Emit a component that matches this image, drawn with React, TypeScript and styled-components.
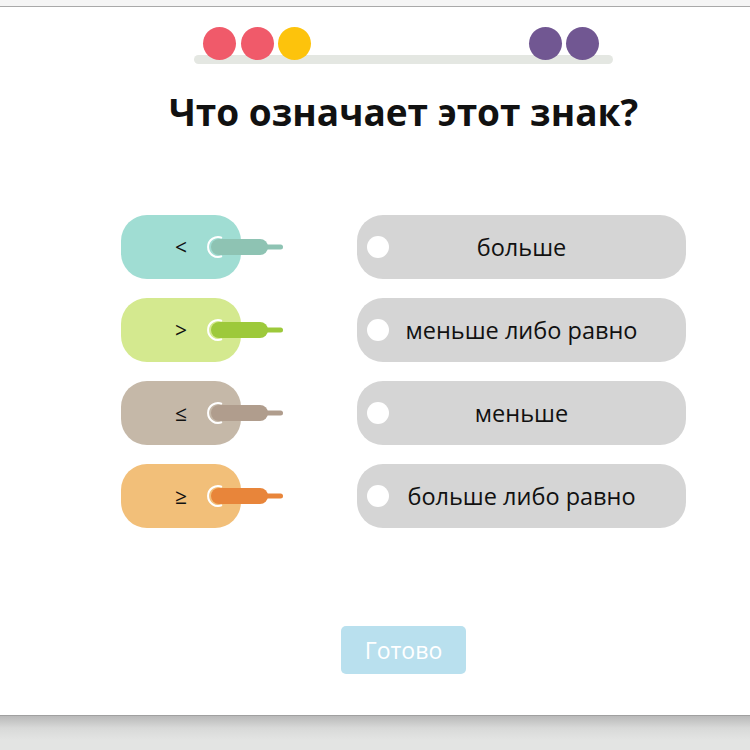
import * as React from 'react'
import styled, { createGlobalStyle } from 'styled-components'

const GlobalStyle = createGlobalStyle`
  html, body {
    margin: 0;
    padding: 0;
    background: #e3e4e3;
    font-family: "Open Sans", "Noto Sans", sans-serif;
  }
`

const TopStrip = styled.div`
  height: 6px;
  background: #f5f5f5;
  border-bottom: 1px solid #a9a9a9;
`

const Panel = styled.main`
  background: #ffffff;
  padding: 20px 0 41px 57px;
  display: flex;
  flex-direction: column;
  align-items: center;
  border-bottom: 1px solid #a0a0a0;
`

const Shade = styled.div`
  height: 34px;
  background: linear-gradient(#b9b9b9, #d8d9d8 12px, #e3e4e3 24px);
`

const Progress = styled.div`
  position: relative;
  width: 419px;
  height: 37px;
  display: flex;
  justify-content: space-between;
  padding: 0 14px 0 9px;
  box-sizing: border-box;

  &::before {
    content: '';
    position: absolute;
    left: 0;
    right: 0;
    bottom: 0;
    height: 9px;
    border-radius: 5px;
    background: #e4e7e2;
  }
`

const DotGroup = styled.div`
  position: relative;
  display: flex;
  gap: 4.5px;
`

const Dot = styled.span<{ $color: string }>`
  width: 33px;
  height: 33px;
  border-radius: 50%;
  background: ${p => p.$color};
`

const Title = styled.h1`
  margin: 26px 0 0;
  font-size: 37px;
  line-height: 44px;
  font-weight: 700;
  color: #111111;
  text-align: center;
`

const Board = styled.div`
  margin-top: 81px;
  display: grid;
  grid-template-columns: 120px 329px;
  column-gap: 116px;
  row-gap: 19px;
`

const SignCard = styled.div<{ $color: string }>`
  position: relative;
  height: 64px;
  border-radius: 26px;
  background: ${p => p.$color};
  display: flex;
  align-items: center;
  justify-content: center;
  font-size: 21px;
  color: #111111;
`

const Plug = styled.svg`
  position: absolute;
  left: 85px;
  top: 20px;
  width: 80px;
  height: 24px;
  overflow: visible;
`

const AnswerCard = styled.div`
  position: relative;
  height: 64px;
  border-radius: 26px;
  background: #d5d5d5;
  display: flex;
  align-items: center;
  justify-content: center;
  font-size: 23.5px;
  color: #111111;
`

const Socket = styled.span`
  position: absolute;
  left: 10px;
  top: 21px;
  width: 22px;
  height: 22px;
  border-radius: 50%;
  background: #ffffff;
`

const DoneButton = styled.button`
  margin-top: 98px;
  width: 125px;
  height: 48px;
  border: none;
  border-radius: 5px;
  background: #b9e0ee;
  color: #ffffff;
  font-family: "Open Sans", "Noto Sans", sans-serif;
  font-size: 23px;
`

const signs = [
  { sign: '<', pill: '#a0ddd3', bar: '#8ec3b3' },
  { sign: '>', pill: '#d4e98f', bar: '#9dc93b' },
  { sign: '≤', pill: '#c5b8a8', bar: '#b09d8d' },
  { sign: '≥', pill: '#f2bf79', bar: '#e8853a' },
]

const answers = ['больше', 'меньше либо равно', 'меньше', 'больше либо равно']

const PlugIcon = ({ color }: { color: string }) => (
  <Plug viewBox="0 0 80 24">
    <path d="M16 2.8 A10 10 0 1 0 16 21.2" fill="none" stroke="#ffffff" strokeWidth="2" />
    <rect x="58" y="9.5" width="19" height="5" rx="2.5" fill={color} />
    <rect x="5" y="4" width="57" height="16" rx="8" fill={color} />
  </Plug>
)

export default function App() {
  return (
    <>
      <GlobalStyle />
      <TopStrip />
      <Panel>
        <Progress>
          <DotGroup>
            <Dot $color="#f05a6a" />
            <Dot $color="#f05a6a" />
            <Dot $color="#fdc30c" />
          </DotGroup>
          <DotGroup>
            <Dot $color="#715792" />
            <Dot $color="#715792" />
          </DotGroup>
        </Progress>
        <Title>Что означает этот знак?</Title>
        <Board>
          {signs.map((s, i) => (
            <React.Fragment key={s.sign}>
              <SignCard $color={s.pill}>
                {s.sign}
                <PlugIcon color={s.bar} />
              </SignCard>
              <AnswerCard>
                <Socket />
                {answers[i]}
              </AnswerCard>
            </React.Fragment>
          ))}
        </Board>
        <DoneButton>Готово</DoneButton>
      </Panel>
      <Shade />
    </>
  )
}
